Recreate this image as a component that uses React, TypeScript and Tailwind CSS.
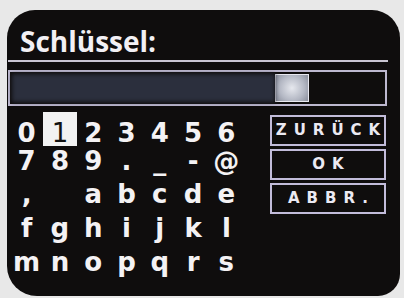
import React from 'react';

const rows: string[][] = [
  ['0', '1', '2', '3', '4', '5', '6'],
  ['7', '8', '9', '.', '_', '-', '@'],
  [',', '', 'a', 'b', 'c', 'd', 'e'],
  ['f', 'g', 'h', 'i', 'j', 'k', 'l'],
  ['m', 'n', 'o', 'p', 'q', 'r', 's'],
];

// row height / top padding so the baselines sit where the photo has them
const rowBox = [
  'h-[34px] pt-[9px]',
  'h-[29px] pt-[3px]',
  'h-[33px] pt-[7px]',
  'h-[34px] pt-[8px]',
  'h-[34px] pt-[8px]',
];

const buttons = ['ZURÜCK', 'OK', 'ABBR.'];

export default function App() {
  return (
    <div
      className="w-[404px] h-[298px] bg-[#e8e8e8] pt-[10px] pl-[7px] pr-[4px] pb-[2px]"
      style={{ fontFamily: '"Open Sans", "DejaVu Sans", sans-serif' }}
    >
      <div className="h-full bg-[#0f0d0d] rounded-tl-[28px] rounded-tr-[28px] rounded-bl-[30px] rounded-br-[22px] overflow-hidden">
        {/* title */}
        <div className="pt-[14px] pl-[13px] h-[48px]">
          <div className="text-[28px] leading-[34px] font-bold text-[#f2f0f4]">Schlüssel:</div>
        </div>
        <div className="ml-[1px] mt-[2px] w-[380px] h-[2px] bg-[#c9c5d2]" />

        {/* input field */}
        <div className="ml-[1px] mt-[8px] w-[379px] h-[36px] border-2 border-[#bdb8cf] flex items-stretch p-[2px]">
          <div className="w-[263px] bg-[#2b2f3d] blur-[2px]" />
          <div className="w-[34px] bg-[radial-gradient(circle,#e6e8ee_0%,#b4b8c4_60%,#8a8e9c_100%)] border border-[#e8e8f0]" />
          <div className="flex-1" />
        </div>

        <div className="mt-[6px] flex">
          {/* character grid */}
          <div
            className="ml-[3px] w-[233px] flex flex-col text-[26px] leading-[25px] font-bold text-[#f4f2f4]"
            style={{ fontFamily: '"DejaVu Sans", sans-serif' }}
          >
            {rows.map((row, r) => (
              <div key={r} className="grid grid-cols-7">
                {row.map((ch, c) => {
                  const active = r === 0 && c === 1;
                  return (
                    <div key={c} className="flex justify-center">
                      <div
                        className={`${rowBox[r]} text-center ${
                          active ? 'w-[36px] bg-[#f2f2f2] text-[#111] font-normal' : 'w-full'
                        }`}
                      >
                        {ch}
                      </div>
                    </div>
                  );
                })}
              </div>
            ))}
          </div>

          {/* buttons */}
          <div className="ml-[27px] mt-[3px] w-[116px] flex flex-col gap-[3px]">
            {buttons.map((b) => (
              <div
                key={b}
                className="h-[31px] border-2 border-[#c2bcda] flex items-center justify-center text-[15px] font-bold tracking-[7px] text-[#ebe9f2] pl-[7px]"
                style={{ fontFamily: '"DejaVu Sans", sans-serif' }}
              >
                {b}
              </div>
            ))}
          </div>
        </div>
      </div>
    </div>
  );
}
